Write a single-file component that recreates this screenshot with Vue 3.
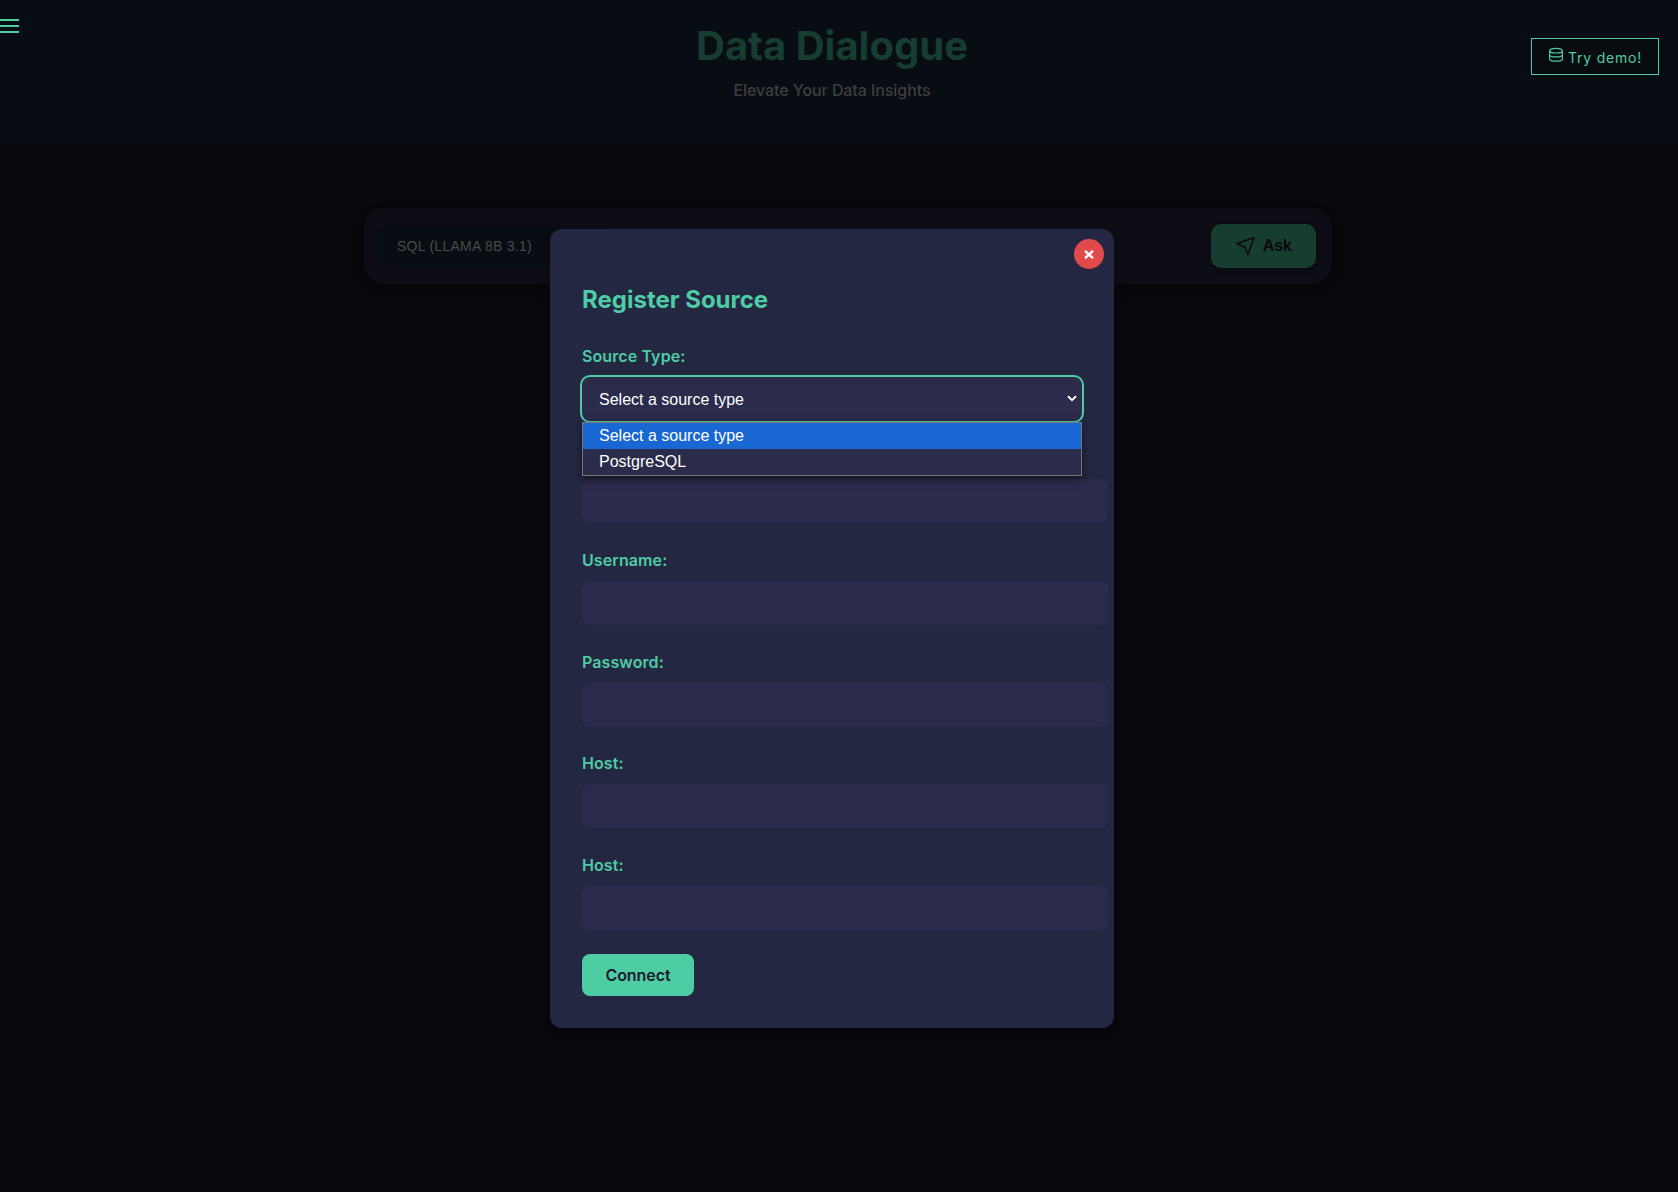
<script setup>
const fields = [
  { id: 'source', label: '' },
  { id: 'username', label: 'Username:' },
  { id: 'password', label: 'Password:' },
  { id: 'host', label: 'Host:' },
  { id: 'port', label: 'Host:' },
]
</script>

<template>
  <div class="page">
    <header class="header">
      <button class="menu" aria-label="Menu"><i></i><i></i><i></i></button>
      <div class="brand">
        <h1>Data Dialogue</h1>
        <p>Elevate Your Data Insights</p>
      </div>
      <button class="demo">
        <svg width="16" height="16" viewBox="0 0 16 16" fill="none" stroke="currentColor" stroke-width="1.2">
          <ellipse cx="8" cy="3.7" rx="6.4" ry="2.3" />
          <path d="M1.6 3.7v8.2c0 1.2 2.9 2.3 6.4 2.3s6.4-1.1 6.4-2.3V3.7M1.6 7.7c0 1.2 2.9 2.2 6.4 2.2s6.4-1 6.4-2.2" />
        </svg>
        <span>Try demo!</span>
      </button>
    </header>

    <main>
      <section class="bar">
        <div class="model">SQL (LLAMA 8B 3.1)</div>
        <button class="ask">
          <svg width="20" height="20" viewBox="0 0 20 20" fill="none" stroke="currentColor" stroke-width="1.5" stroke-linejoin="round">
            <path d="M1.8 7.5 18.9 1.7 12.9 18.5 9.8 11.2Z" />
          </svg>
          <span>Ask</span>
        </button>
      </section>
    </main>

    <div class="overlay">
      <div class="modal">
        <button class="close" aria-label="Close">
          <svg width="10" height="10" viewBox="0 0 10 10" stroke="#fff" stroke-width="2.4">
            <path d="M1 1.8 9 9.2M9 1.8 1 9.2" />
          </svg>
        </button>
        <h2>Register Source</h2>
        <div class="label">Source Type:</div>
        <div class="select">
          <span>Select a source type</span>
          <svg width="10" height="7" viewBox="0 0 10 7" fill="none" stroke="#fff" stroke-width="2">
            <path d="M1 1.2 5 5.2 9 1.2" />
          </svg>
          <div class="options">
            <div class="option active">Select a source type</div>
            <div class="option">PostgreSQL</div>
          </div>
        </div>
        <div v-for="f in fields" :key="f.id" class="field">
          <div class="label">{{ f.label }}</div>
          <div class="input"></div>
        </div>
        <button class="connect">Connect</button>
      </div>
    </div>
  </div>
</template>

<style>
body {
  margin: 0;
  background: #08070c;
}
</style>

<style scoped>
.page {
  position: relative;
  height: 1192px;
  overflow: hidden;
  background: #08070c;
  font-family: Inter, sans-serif;
}
button {
  border: 0;
  padding: 0;
  font-family: inherit;
}
.header {
  position: relative;
  display: flex;
  justify-content: center;
  height: 144px;
  box-sizing: border-box;
  padding-right: 14px;
  background: #080c13;
}
.brand {
  text-align: center;
}
h1 {
  margin: 22px 0 0;
  font-size: 40px;
  line-height: 48px;
  font-weight: 700;
  color: #173d31;
}
.brand p {
  margin: 10px 0 0;
  font-size: 16px;
  line-height: 20px;
  font-weight: 500;
  letter-spacing: -0.08px;
  color: #3e3e40;
}
.menu {
  position: absolute;
  left: 0;
  top: 19px;
  display: flex;
  flex-direction: column;
  gap: 4px;
  width: 18.6px;
  background: none;
}
.menu i {
  height: 2px;
  background: #4ecca3;
}
.demo {
  position: absolute;
  right: 19px;
  top: 38px;
  display: flex;
  justify-content: center;
  gap: 4px;
  width: 128px;
  height: 37px;
  border: 1px solid #4ecca3;
  background: #080c11;
  color: #4ecca3;
  font-size: 14px;
  letter-spacing: 0.8px;
}
.demo svg {
  margin-top: 8px;
}
.demo span {
  line-height: 17px;
  margin-top: 10px;
}
main {
  display: flex;
  justify-content: center;
  padding: 64px 0 0 18px;
}
.bar {
  display: flex;
  justify-content: space-between;
  align-items: center;
  width: 968px;
  height: 76px;
  box-sizing: border-box;
  padding: 0 16px;
  border-radius: 20px;
  background: #0d0d15;
  box-shadow: 0 4px 10px rgba(0, 0, 0, 0.3);
}
.model {
  width: 228px;
  height: 40px;
  box-sizing: border-box;
  padding-left: 17px;
  border-radius: 8px;
  background: #080c13;
  font: 14px/41px "Liberation Sans", sans-serif;
  letter-spacing: 0.26px;
  color: #4b4b4d;
}
.ask {
  display: flex;
  align-items: center;
  justify-content: center;
  gap: 8px;
  width: 105px;
  height: 44px;
  border-radius: 10px;
  background: #173d31;
  color: #08080e;
  font-size: 16px;
  font-weight: 600;
  box-shadow: 0 2px 5px rgba(0, 0, 0, 0.3);
}
.ask span {
  padding-bottom: 2px;
}
.overlay {
  position: absolute;
  inset: 0;
  display: flex;
  align-items: flex-start;
  justify-content: center;
  padding: 229px 14px 0 0;
}
.modal {
  position: relative;
  width: 564px;
  height: 798.5px;
  box-sizing: border-box;
  padding: 55.5px 32px 0;
  border-radius: 12px;
  background: #242742;
  box-shadow: 0 4px 8px rgba(0, 0, 0, 0.3);
}
.close {
  position: absolute;
  top: 10px;
  right: 10px;
  display: flex;
  align-items: center;
  justify-content: center;
  width: 30px;
  height: 30px;
  border-radius: 50%;
  background: #e04a4a;
}
h2 {
  margin: 0 0 28px;
  font-size: 24px;
  line-height: 30px;
  font-weight: 700;
  color: #4ecca3;
}
.label {
  height: 26px;
  font-size: 16px;
  line-height: 26px;
  font-weight: 600;
  letter-spacing: 0.1px;
  color: #4ecca3;
}
.select {
  position: relative;
  display: flex;
  align-items: center;
  justify-content: space-between;
  width: 500px;
  height: 44px;
  margin-top: 8px;
  box-sizing: border-box;
  padding: 0 5px 0 17px;
  border-radius: 8px;
  outline: 2px solid #4ecca3;
  background: #2b2b4b;
  color: #fff;
  font: 16px/20px "Liberation Sans", sans-serif;
}
.select > span {
  padding-top: 2px;
}
.options {
  position: absolute;
  left: 0;
  top: 45.5px;
  z-index: 1;
  width: 500px;
  box-sizing: border-box;
  border: 1px solid #767676;
  background: #2b2b4b;
  box-shadow: 0 3px 8px rgba(0, 0, 0, 0.5);
}
.option {
  height: 26px;
  padding-left: 16px;
  line-height: 26px;
}
.option.active {
  background: #1967d2;
}
.field {
  padding-top: 23.7px;
}
.select + .field {
  padding-top: 24.8px;
}
.input {
  width: 526px;
  height: 44px;
  margin-top: 8px;
  border-radius: 8px;
  background: #2b2b4b;
}
.connect {
  width: 112px;
  height: 42.5px;
  margin-top: 23.5px;
  border-radius: 8px;
  background: #4ecca3;
  color: #1a1a2e;
  font-size: 16px;
  font-weight: 600;
  letter-spacing: -0.05px;
}
</style>
